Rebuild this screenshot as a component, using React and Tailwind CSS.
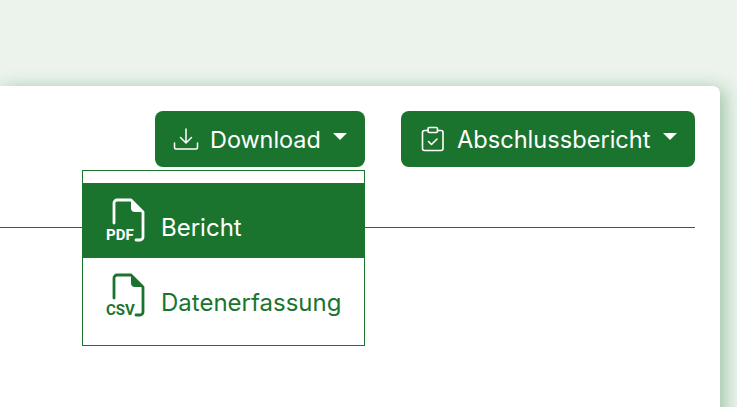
import React from "react";

const font = { fontFamily: '"Inter", sans-serif' };

function Caret() {
  return <span className="ml-[12px] mb-[5px] w-0 h-0 border-x-[7px] border-x-transparent border-t-[7px] border-t-white" />;
}

function DownloadIcon() {
  return (
    <svg width="26" height="26" viewBox="0 0 26 26" fill="none" stroke="currentColor" strokeWidth="1.5" strokeLinecap="round" strokeLinejoin="round">
      <path d="M13 3v13.500M7.500 11.500l5.500 5.500 5.500-5.500" />
      <path d="M1.500 17v4.500a1.500 1.500 0 0 0 1.500 1.500h20a1.500 1.500 0 0 0 1.500-1.500V17" />
    </svg>
  );
}

function ClipboardIcon() {
  return (
    <svg width="24" height="26" viewBox="0 0 24 26" fill="none" stroke="currentColor" strokeWidth="1.600" strokeLinecap="round" strokeLinejoin="round">
      <path d="M7 4.500H3.500a2 2 0 0 0-2 2v16a2 2 0 0 0 2 2h16.500a2 2 0 0 0 2-2v-16a2 2 0 0 0-2-2H16.500" />
      <rect x="7" y="1.500" width="9.500" height="5" rx="1.300" />
      <path d="M7.500 15.500l3 3 5.500-5.500" />
    </svg>
  );
}

function FileIcon({ label }) {
  return (
    <span className="relative block w-[40px] h-[44px] -mt-[2px]">
      <svg className="absolute left-[5px] top-0" width="34" height="44" viewBox="0 0 34 44" fill="none">
        <path d="M3 25V5a3 3 0 0 1 3-3h14l12 12v25a3 3 0 0 1-3 3h-4" stroke="currentColor" strokeWidth="2.800" strokeLinecap="round" strokeLinejoin="round" />
        <path d="M20 3v7a4 4 0 0 0 4 4h7z" fill="currentColor" />
      </svg>
      <span className="absolute left-0 bottom-[-1px] text-[15px] leading-[16px] font-bold" style={{ fontFamily: '"Roboto", sans-serif' }}>{label}</span>
    </span>
  );
}

export default function App() {
  return (
    <div className="w-[737px] h-[407px] overflow-hidden bg-[#ebf3ec] pt-[86px] pr-[17px]" style={font}>
      <div className="h-[340px] bg-white rounded-tr-[7px] shadow-[4px_3px_18px_rgba(27,117,46,0.4)] pt-[25px] pr-[25px]">
        <div className="relative h-[117px] border-b border-[#3d5c45]">
          <div className="flex justify-end gap-[36px]">
            <button className="flex items-center h-[56px] w-[210px] pl-[18px] rounded-[8px] bg-[#1b742e] text-white text-[23.4px]">
              <DownloadIcon />
              <span className="ml-[11px] pt-[2px]">Download</span>
              <Caret />
            </button>
            <button className="flex items-center h-[56px] w-[294px] pl-[20px] rounded-[8px] bg-[#1b742e] text-white text-[23.6px]">
              <ClipboardIcon />
              <span className="ml-[12px] pt-[2px]">Abschlussbericht</span>
              <Caret />
            </button>
          </div>
          <div className="absolute left-[82px] top-[59px] w-[283px] h-[176px] bg-white border border-[#1b742e] pt-[12px] text-[24px]">
            <div className="flex items-center h-[75px] pl-[23px] gap-[15px] bg-[#1b742e] text-white">
              <FileIcon label="PDF" />
              <span className="pt-[14px]">Bericht</span>
            </div>
            <div className="flex items-center h-[75px] pl-[23px] gap-[15px] text-[#1b742e]">
              <FileIcon label="CSV" />
              <span className="pt-[14px]">Datenerfassung</span>
            </div>
          </div>
        </div>
      </div>
    </div>
  );
}
